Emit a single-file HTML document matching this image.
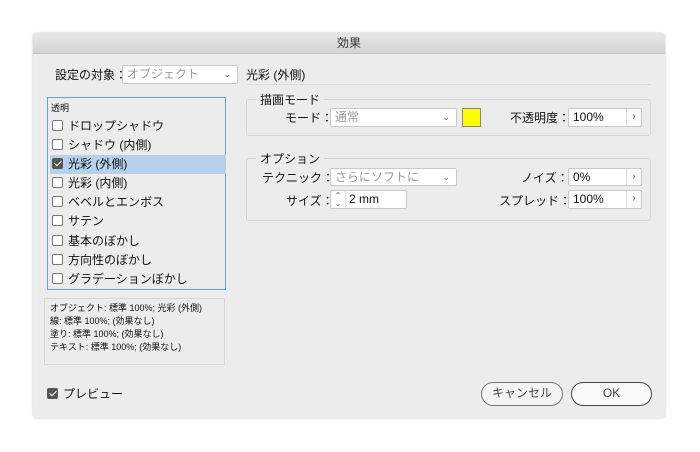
<!DOCTYPE html>
<html><head><meta charset="utf-8"><style>
*{box-sizing:border-box;margin:0;padding:0}
body{width:700px;height:452px;background:#fff;position:relative;overflow:hidden;font-family:"Liberation Sans","Noto Sans CJK JP",sans-serif;font-size:12px;color:#111}
.a{position:absolute;white-space:nowrap}
.dlg{position:absolute;left:33px;top:33px;width:632px;height:385px;background:#ececec;border-radius:4px;box-shadow:0 0 2px rgba(0,0,0,.25)}
.tb{position:absolute;left:33px;top:33px;width:632px;height:21px;background:linear-gradient(#e8e8e8,#d4d4d4);border-bottom:1px solid #c4c4c4;border-radius:4px 4px 0 0;text-align:center;font-size:12px;line-height:21px;color:#333}
.fld{position:absolute;background:#fff;border:1px solid #c8c8c8;border-radius:2px;font-size:12px;line-height:16px;padding-left:4px}
.gray{color:#999}
.chev{position:absolute;right:6px;top:0;font-size:9px;color:#666}
.btn{position:absolute;width:15px;border-left:1px solid #ddd;right:0;top:0;bottom:0;text-align:center;font-size:10px;color:#666;background:#fafafa}
.grp{position:absolute;border:1px solid #d6d6d6;border-radius:3px}
.leg{position:absolute;background:#ececec;padding:0 4px;font-size:12px}
.cb{display:inline-block;width:11px;height:11px;border:1px solid #777;border-radius:2px;background:#fff;vertical-align:-1px;margin-right:5px}
.cbk{background:#555;border-color:#555;position:relative}
.cbk:after{content:"";position:absolute;left:3px;top:0px;width:3px;height:6px;border:solid #fff;border-width:0 1.5px 1.5px 0;transform:rotate(45deg)}
.it{position:absolute;left:2px;width:176px;height:19px;line-height:19px;font-size:12px;padding-left:2px}
.pb{position:absolute;border:1.5px solid #777;border-radius:12px;background:#f4f4f4;text-align:center;line-height:20px;font-size:12px;color:#444}
</style></head><body>
<div class="dlg"></div>
<div class="tb">効果</div>

<div class="a" style="left:55px;top:66px">設定の対象：</div>
<div class="fld gray" style="left:122px;top:65px;width:116px;height:19px">オブジェクト<span class="chev">⌄</span></div>
<div class="a" style="left:246px;top:66px">光彩 (外側)</div>
<div class="a" style="left:246px;top:84px;width:405px;height:1px;background:#dcdcdc"></div>

<div class="a" style="left:47px;top:97px;width:179px;height:193px;border:1.5px solid #6b9de3;background:#ececec">
<div class="a" style="left:3px;top:3px;font-size:9px">透明</div>
<div class="it" style="top:19px"><span class="cb"></span>ドロップシャドウ</div>
<div class="it" style="top:38px"><span class="cb"></span>シャドウ (内側)</div>
<div class="it" style="top:57px;background:#b7d0ec"><span class="cb cbk"></span>光彩 (外側)</div>
<div class="it" style="top:76px"><span class="cb"></span>光彩 (内側)</div>
<div class="it" style="top:95px"><span class="cb"></span>ベベルとエンボス</div>
<div class="it" style="top:114px"><span class="cb"></span>サテン</div>
<div class="it" style="top:134px"><span class="cb"></span>基本のぼかし</div>
<div class="it" style="top:153px"><span class="cb"></span>方向性のぼかし</div>
<div class="it" style="top:172px"><span class="cb"></span>グラデーションぼかし</div>
</div>

<div class="a" style="left:44px;top:298px;width:181px;height:67px;border:1px solid #d8d8d8;font-size:9px;line-height:13px;padding:3px 5px">オブジェクト: 標準 100%; 光彩 (外側)<br>線: 標準 100%; (効果なし)<br>塗り: 標準 100%; (効果なし)<br>テキスト: 標準 100%; (効果なし)</div>

<div class="a" style="left:47px;top:385px;font-size:12px"><span class="cb cbk"></span>プレビュー</div>
<div class="pb" style="left:481px;top:382px;width:82px;height:24px">キャンセル</div>
<div class="pb" style="left:571px;top:382px;width:81px;height:24px;border-color:#444;background:#fafafa">OK</div>

<div class="grp" style="left:246px;top:99px;width:405px;height:37px"></div>
<div class="leg" style="left:256px;top:91px">描画モード</div>
<div class="a" style="left:285px;top:109px">モード：</div>
<div class="fld gray" style="left:330px;top:108px;width:127px;height:19px">通常<span class="chev">⌄</span></div>
<div class="a" style="left:462px;top:108px;width:19px;height:19px;background:#ffff00;border:1px solid #888"></div>
<div class="a" style="left:510px;top:109px">不透明度：</div>
<div class="fld" style="left:568px;top:108px;width:74px;height:19px">100%<span class="btn">›</span></div>

<div class="grp" style="left:246px;top:158px;width:405px;height:63px"></div>
<div class="leg" style="left:256px;top:150px">オプション</div>
<div class="a" style="left:262px;top:169px">テクニック：</div>
<div class="fld gray" style="left:330px;top:168px;width:127px;height:18px">さらにソフトに<span class="chev">⌄</span></div>
<div class="a" style="left:521px;top:169px">ノイズ：</div>
<div class="fld" style="left:568px;top:168px;width:74px;height:18px">0%<span class="btn">›</span></div>
<div class="a" style="left:286px;top:192px">サイズ：</div>
<div class="fld" style="left:330px;top:190px;width:77px;height:19px;padding-left:18px"><span class="a" style="left:0;top:0;width:15px;height:17px;border-right:1px solid #ddd;font-size:8px;line-height:8px;text-align:center;color:#555;padding-top:1px">⌃<br>⌄</span>2 mm</div>
<div class="a" style="left:499px;top:192px">スプレッド：</div>
<div class="fld" style="left:568px;top:190px;width:74px;height:19px">100%<span class="btn">›</span></div>
</body></html>
